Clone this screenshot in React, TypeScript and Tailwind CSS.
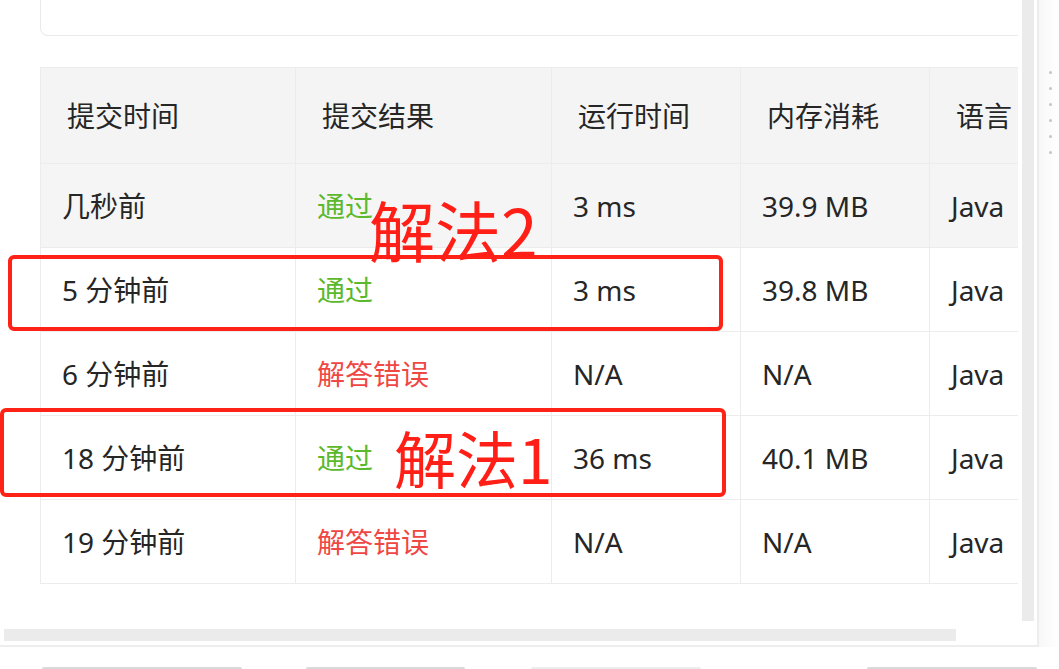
const cols = [255, 256, 189, 189, 220];

type Row = {
  time: string;
  result: string;
  ok: boolean;
  runtime: string;
  memory: string;
  lang: string;
};

const rows: Row[] = [
  { time: "几秒前", result: "通过", ok: true, runtime: "3 ms", memory: "39.9 MB", lang: "Java" },
  { time: "5 分钟前", result: "通过", ok: true, runtime: "3 ms", memory: "39.8 MB", lang: "Java" },
  { time: "6 分钟前", result: "解答错误", ok: false, runtime: "N/A", memory: "N/A", lang: "Java" },
  { time: "18 分钟前", result: "通过", ok: true, runtime: "36 ms", memory: "40.1 MB", lang: "Java" },
  { time: "19 分钟前", result: "解答错误", ok: false, runtime: "N/A", memory: "N/A", lang: "Java" },
];

function Cell({ w, children, className = "" }: { w: number; children: React.ReactNode; className?: string }) {
  return (
    <div
      className={`shrink-0 h-full flex items-center border-r border-[#ececec] whitespace-nowrap ${className}`}
      style={{ width: w }}
    >
      {children}
    </div>
  );
}

export default function App() {
  return (
    <div className="relative w-[1059px] h-[669px] overflow-hidden bg-white text-[#262626] font-['Noto_Sans','Noto_Sans_CJK_SC',sans-serif]">
      <div className="flex h-[647px]">
        {/* 提交记录面板 */}
        <div className="w-[1039px] shrink-0 border-r-2 border-b-2 border-[#ededed] flex flex-col">
          <div className="flex h-[621px]">
            <div className="w-[1018px] shrink-0 overflow-hidden pl-[40px]">
              <div className="w-[1100px] h-[36px] border border-t-0 border-[#e9e9e9] rounded-b-[8px]" />

              <div className="mt-[31px] w-[1110px] border-l border-t border-[#ececec] text-[28px] leading-none">
                <div className="flex h-[96px] bg-[#f4f4f4] border-b border-[#ececec]">
                  <Cell w={cols[0]} className="pl-[26px]">提交时间</Cell>
                  <Cell w={cols[1]} className="pl-[26px]">提交结果</Cell>
                  <Cell w={cols[2]} className="pl-[26px]">运行时间</Cell>
                  <Cell w={cols[3]} className="pl-[26px]">内存消耗</Cell>
                  <Cell w={cols[4]} className="pl-[26px]">语言</Cell>
                </div>
                {rows.map((r, i) => (
                  <div
                    key={i}
                    className={`flex h-[84px] border-b border-[#ececec] ${i === 0 ? "bg-[#f5f5f5]" : "bg-white"}`}
                  >
                    <Cell w={cols[0]} className="pl-[21px]">{r.time}</Cell>
                    <Cell w={cols[1]} className={`pl-[21px] ${r.ok ? "text-[#5cb82c]" : "text-[#ef4743]"}`}>
                      {r.result}
                    </Cell>
                    <Cell w={cols[2]} className="pl-[21px]">{r.runtime}</Cell>
                    <Cell w={cols[3]} className="pl-[21px]">{r.memory}</Cell>
                    <Cell w={cols[4]} className="pl-[21px]">{r.lang}</Cell>
                  </div>
                ))}
              </div>
            </div>
            <div className="ml-[4px] w-[12px] h-full bg-[#ebebeb]" />
          </div>
          <div className="mt-[8px] ml-[4px] w-[952px] h-[12px] bg-[#ebebeb]" />
        </div>

        {/* 右侧拖拽条 */}
        <div className="flex-1 bg-gradient-to-r from-[#f7f7f7] to-white flex flex-col items-center pt-[71px] gap-[13px] pl-[2px]">
          {Array.from({ length: 6 }).map((_, i) => (
            <span key={i} className="w-[3px] h-[3px] rounded-full bg-[#c4c4c4]" />
          ))}
        </div>
      </div>

      {/* 底部按钮顶部 */}
      <div className="flex items-end h-[22px]">
        <div className="ml-[42px] w-[200px] h-[2px] rounded-t-[3px] bg-[#d9d9d9]" />
        <div className="ml-[64px] w-[159px] h-[2px] rounded-t-[3px] bg-[#d9d9d9]" />
        <div className="ml-[66px] w-[170px] h-[2px] rounded-t-[3px] bg-[#ececec]" />
        <div className="ml-[166px] w-[170px] h-[2px] rounded-t-[3px] bg-[#d9d9d9]" />
      </div>

      {/* 标注 */}
      <div className="absolute left-[8px] top-[255px] w-[715px] h-[76px] border-[4px] border-[#ff2216] rounded-[6px]" />
      <div className="absolute left-0 top-[408px] w-[726px] h-[89px] border-[4px] border-[#ff2216] rounded-[6px]" />
      <div className="absolute left-[369px] top-[195px] text-[66px] leading-none text-[#ff1f17] font-['Noto_Sans_CJK_SC','Noto_Sans',sans-serif] whitespace-nowrap">
        解法2
      </div>
      <div className="absolute left-[394px] top-[426px] text-[62px] leading-none text-[#ff1f17] font-['Noto_Sans_CJK_SC','Noto_Sans',sans-serif] whitespace-nowrap">
        解法1
      </div>
    </div>
  );
}
